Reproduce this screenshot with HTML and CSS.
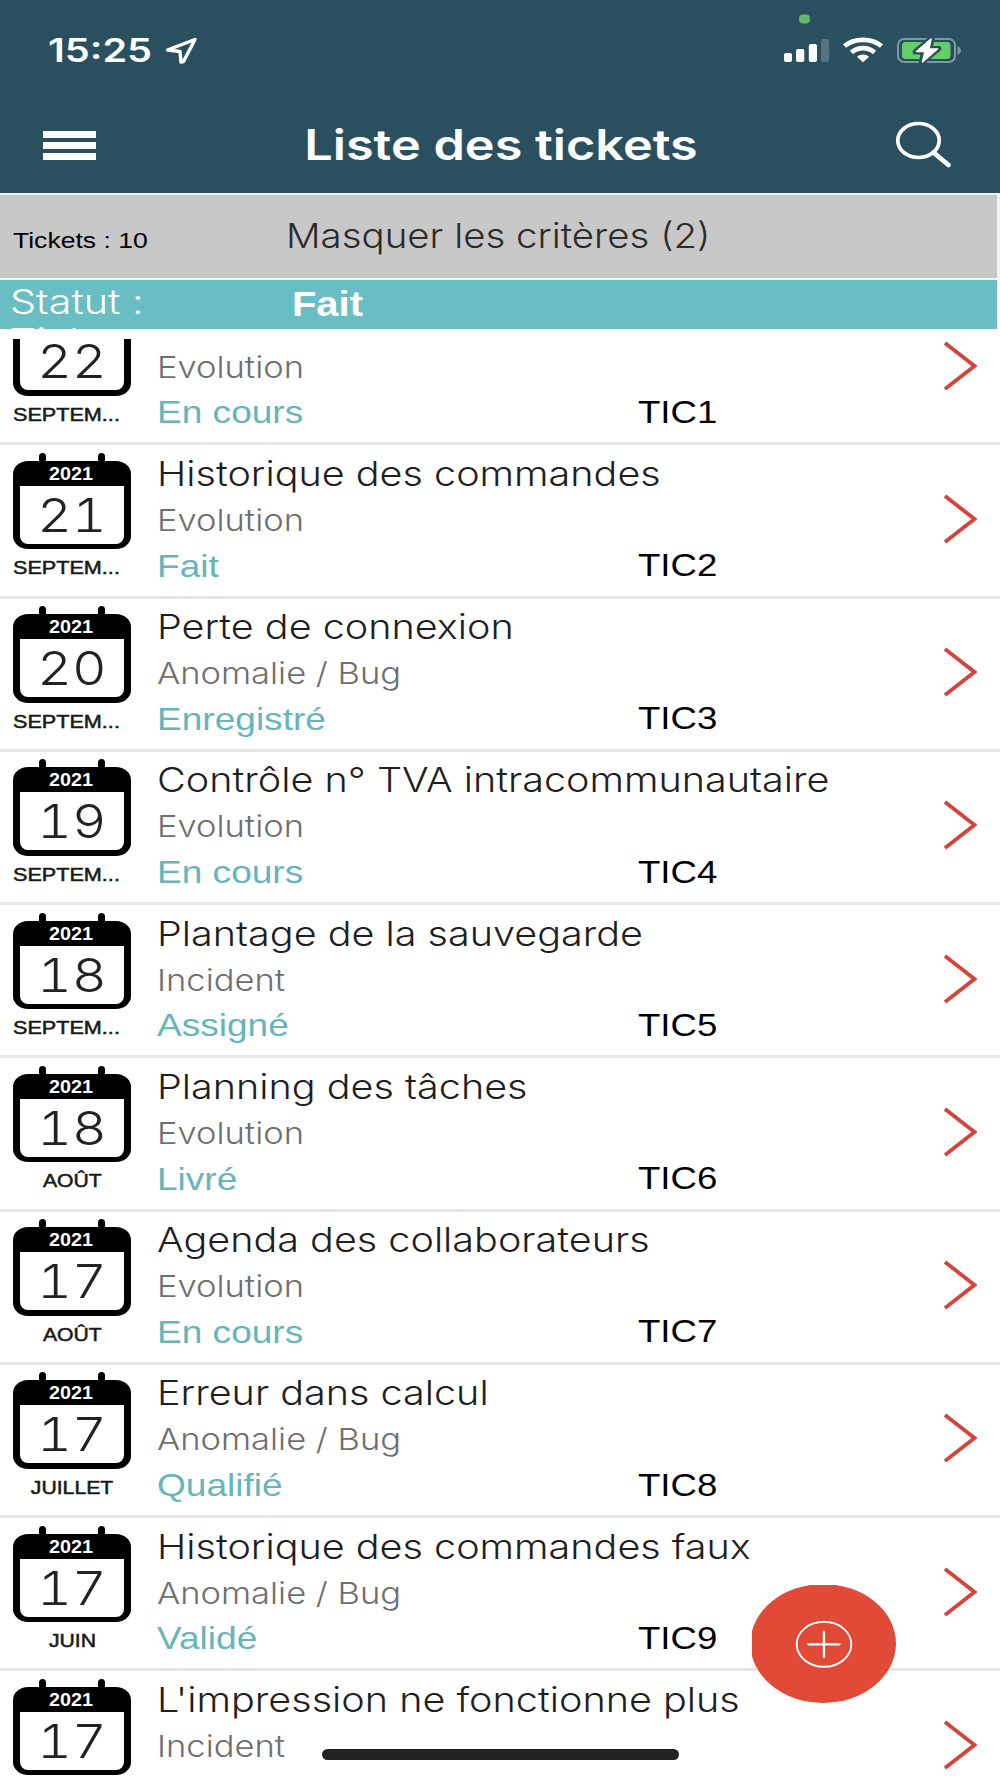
FILE: index.html
```html
<!DOCTYPE html>
<html lang="fr">
<head>
<meta charset="utf-8">
<title>Liste des tickets</title>
<link rel="stylesheet" href="styles.css">
</head>
<body>
<svg class="defs" width="0" height="0" aria-hidden="true">
  <symbol id="chevron" viewBox="0 0 34 50"><path d="M2 2 L31.5 25 L2 48" fill="none" stroke="#d6433b" stroke-width="3.8"/></symbol>
</svg>
<div class="screen">
  <header class="header">
    <div class="status">
      <span class="time">15:25</span>
      <svg class="location" width="34" height="28" viewBox="0 0 34 28"><path d="M30 2.5 L2.500 13 L15 14.500 L16 25 L18.500 24.500 Z" fill="none" stroke="#fff" stroke-width="3.4" stroke-linejoin="round"/></svg>
      <svg class="indicators" width="190" height="56" viewBox="0 0 190 56">
        <rect x="29" y="4.5" width="11" height="9" rx="4" fill="#5fb768"/>
        <g fill="#fff">
          <rect x="14" y="43" width="8" height="9" rx="2"/>
          <rect x="26" y="39" width="8.3" height="13" rx="2"/>
          <rect x="38.8" y="34" width="8.2" height="18" rx="2"/>
          <rect x="51" y="29" width="8.2" height="23" rx="2" fill="#56737f"/>
        </g>
        <g fill="none" stroke="#fff">
          <path d="M74.500 36 C84 27.700 102 27.700 111.500 36" stroke-width="4.8"/>
          <path d="M81.500 42.500 C88 36.700 98 36.700 104.500 42.500" stroke-width="4.800"/>
        </g>
        <path d="M87 47 C90.500 43.800 95.500 43.800 99 47 L93 52.300 Z" fill="#fff"/>
        <rect x="128" y="29" width="57" height="23" rx="6" fill="none" stroke="#8097a5" stroke-width="2"/>
        <path d="M188 36.500 Q193 40.500 188 44.500 Z" fill="#8097a5" stroke="#8097a5"/>
        <rect x="132" y="32" width="48.500" height="17" rx="3.500" fill="#62d067"/>
        <path d="M162.500 27 L145 42 H153.500 L151 53.500 L169 38.500 H160 Z" fill="#fff" stroke="#2a4f5f" stroke-width="5" stroke-linejoin="round"/>
        <path d="M161 29 L146.500 41.500 H155 L152.500 52 L167.500 39 H159 Z" fill="#fff" stroke="#fff" stroke-width="1.500" stroke-linejoin="round"/>
      </svg>
    </div>
    <div class="navbar">
      <div class="menu"><i></i><i></i><i></i></div>
      <h1 class="heading">Liste des tickets</h1>
      <svg class="search" width="60" height="50" viewBox="0 0 60 50"><g fill="none" stroke="#fff" stroke-width="3.700" stroke-linecap="round"><ellipse cx="24.500" cy="20.500" rx="20.700" ry="17"/><path d="M39.500 32.500 L54.500 45" stroke-width="4.800"/></g></svg>
    </div>
  </header>
  <div class="criteria">
    <span class="count">Tickets : 10</span>
    <span class="toggle">Masquer les critères (2)</span>
  </div>
  <div class="filters">
    <span class="filter-name">Statut :</span><span class="filter-value">Fait</span>
    <span class="filter-name">Ticket :</span>
  </div>
  <main class="list">
    <article class="row first">
      <div class="date"><div class="cal"><span class="year"></span><span class="day"><b>22</b></span></div><span class="month long">SEPTEM...</span></div>
      <div class="details"><span class="title"></span><span class="type">Evolution</span><span class="state">En cours</span></div>
      <span class="ref">TIC1</span><svg class="chevron"><use href="#chevron"/></svg>
    </article>
    <article class="row">
      <div class="date"><div class="cal"><span class="year">2021</span><span class="day"><b>21</b></span></div><span class="month long">SEPTEM...</span></div>
      <div class="details"><span class="title">Historique des commandes</span><span class="type">Evolution</span><span class="state">Fait</span></div>
      <span class="ref">TIC2</span><svg class="chevron"><use href="#chevron"/></svg>
    </article>
    <article class="row">
      <div class="date"><div class="cal"><span class="year">2021</span><span class="day"><b>20</b></span></div><span class="month long">SEPTEM...</span></div>
      <div class="details"><span class="title">Perte de connexion</span><span class="type">Anomalie / Bug</span><span class="state">Enregistré</span></div>
      <span class="ref">TIC3</span><svg class="chevron"><use href="#chevron"/></svg>
    </article>
    <article class="row">
      <div class="date"><div class="cal"><span class="year">2021</span><span class="day"><b>19</b></span></div><span class="month long">SEPTEM...</span></div>
      <div class="details"><span class="title">Contrôle n° TVA intracommunautaire</span><span class="type">Evolution</span><span class="state">En cours</span></div>
      <span class="ref">TIC4</span><svg class="chevron"><use href="#chevron"/></svg>
    </article>
    <article class="row">
      <div class="date"><div class="cal"><span class="year">2021</span><span class="day"><b>18</b></span></div><span class="month long">SEPTEM...</span></div>
      <div class="details"><span class="title">Plantage de la sauvegarde</span><span class="type">Incident</span><span class="state">Assigné</span></div>
      <span class="ref">TIC5</span><svg class="chevron"><use href="#chevron"/></svg>
    </article>
    <article class="row">
      <div class="date"><div class="cal"><span class="year">2021</span><span class="day"><b>18</b></span></div><span class="month">AOÛT</span></div>
      <div class="details"><span class="title">Planning des tâches</span><span class="type">Evolution</span><span class="state">Livré</span></div>
      <span class="ref">TIC6</span><svg class="chevron"><use href="#chevron"/></svg>
    </article>
    <article class="row">
      <div class="date"><div class="cal"><span class="year">2021</span><span class="day"><b>17</b></span></div><span class="month">AOÛT</span></div>
      <div class="details"><span class="title">Agenda des collaborateurs</span><span class="type">Evolution</span><span class="state">En cours</span></div>
      <span class="ref">TIC7</span><svg class="chevron"><use href="#chevron"/></svg>
    </article>
    <article class="row">
      <div class="date"><div class="cal"><span class="year">2021</span><span class="day"><b>17</b></span></div><span class="month">JUILLET</span></div>
      <div class="details"><span class="title">Erreur dans calcul</span><span class="type">Anomalie / Bug</span><span class="state">Qualifié</span></div>
      <span class="ref">TIC8</span><svg class="chevron"><use href="#chevron"/></svg>
    </article>
    <article class="row">
      <div class="date"><div class="cal"><span class="year">2021</span><span class="day"><b>17</b></span></div><span class="month">JUIN</span></div>
      <div class="details"><span class="title">Historique des commandes faux</span><span class="type">Anomalie / Bug</span><span class="state">Validé</span></div>
      <span class="ref">TIC9</span><svg class="chevron"><use href="#chevron"/></svg>
    </article>
    <article class="row">
      <div class="date"><div class="cal"><span class="year">2021</span><span class="day"><b>17</b></span></div></div>
      <div class="details"><span class="title">L'impression ne fonctionne plus</span><span class="type">Incident</span></div>
      <span class="ref"></span><svg class="chevron"><use href="#chevron"/></svg>
    </article>
  </main>
  <svg class="add" width="144" height="118" viewBox="0 0 144 118">
    <ellipse cx="71.200" cy="58.500" rx="72.800" ry="59.500" fill="#e04a36"/>
    <ellipse cx="72" cy="59.300" rx="27.300" ry="22.500" fill="none" stroke="#fff" stroke-width="1.900"/>
    <path d="M56.500 59.300 H87.500 M72 47 V72" stroke="#fff" stroke-width="2.300" stroke-linecap="round"/>
  </svg>
  <div class="home-indicator"></div>
</div>
</body>
</html>
```
FILE: styles.css
```css
* { box-sizing: border-box; }
body {
  margin: 0;
  background: #fff;
  font-family: "Liberation Sans", Arial, sans-serif;
  color: #000;
}
.defs { position: absolute; }
.screen {
  position: relative;
  display: flex;
  flex-direction: column;
  width: 1000px;
  height: 1778px;
  overflow: hidden;
}
span, h1 { white-space: nowrap; }

/* Header */
.header {
  flex: none;
  height: 193px;
  background: #2a4f5f;
  color: #fff;
}
.status {
  display: flex;
  align-items: flex-start;
  height: 98px;
  padding: 10px 40px 0 48px;
}
.time {
  width: 117px;
  padding-top: 21px;
  font: 600 32px/40px Inter, sans-serif;
  transform: scaleX(1.24);
  transform-origin: left;
}
.location { margin-top: 27px; }
.indicators { margin-left: auto; overflow: visible; }
.navbar {
  display: flex;
  justify-content: space-between;
  padding: 21px 46px 0 43px;
}
.menu {
  display: flex;
  flex-direction: column;
  gap: 4px;
  width: 53px;
  padding-top: 12px;
}
.menu i { height: 7px; background: #fff; }
.heading {
  margin: 0 0 0 12px;
  font: 600 42px/52px Inter, sans-serif;
  transform: scaleX(1.2);
}
.search { margin-top: 1px; }

/* Criteria bar and active filters */
.criteria {
  flex: none;
  display: flex;
  height: 87px;
  border: solid #f3f3f3;
  border-width: 2px 3px 2px 0;
  background: #c8c8c8;
}
.count {
  width: 286px;
  padding: 33px 0 0 11px;
  font-size: 22.5px;
  line-height: 26px;
  transform: scaleX(1.18);
  transform-origin: left;
}
.toggle {
  padding-top: 21px;
  font: 300 34px/40px Inter, sans-serif;
  color: #2b2b2b;
  transform: scaleX(1.13);
  transform-origin: left;
}
.filters {
  flex: none;
  display: grid;
  grid-template-columns: 282px 1fr;
  grid-auto-rows: 38.5px;
  width: 997px;
  height: 48.5px;
  padding-left: 10px;
  overflow: hidden;
  background: #68bec3;
  color: #fff;
}
.filter-name {
  font: 300 34px/42px Inter, sans-serif;
  transform: translateY(0.5px) scaleX(1.215);
  transform-origin: left;
}
.filter-value {
  font-size: 35px;
  font-weight: 700;
  line-height: 47px;
  transform: scaleX(1.14);
  transform-origin: left;
}

/* Ticket list */
.list {
  flex: 1;
  min-height: 0;
  margin-top: 10.5px;
  overflow: hidden;
}
.row {
  display: grid;
  grid-template-columns: 118px 480px 332px 34px;
  height: 153.25px;
  padding-left: 13px;
  border-bottom: 3px solid #e6e6e6;
}
.row.first { margin-top: -46.8px; }
.date {
  display: flex;
  flex-direction: column;
  padding-top: 15.5px;
}
.cal {
  position: relative;
  display: flex;
  flex-direction: column;
  height: 88.5px;
  padding: 0 7px 6px;
  border-radius: 15px / 13px;
  background: #000;
  text-align: center;
}
.cal::before, .cal::after {
  content: "";
  position: absolute;
  top: -8px;
  width: 7px;
  height: 14px;
  border-radius: 3.5px;
  background: #000;
}
.cal::before { left: 26px; }
.cal::after { right: 26px; }
.year {
  height: 25px;
  color: #fff;
  font-size: 17.5px;
  font-weight: 700;
  line-height: 27px;
  transform: translateX(-1px) scaleX(1.13);
}
.day {
  flex: 1;
  border-radius: 0 0 8px 8px;
  background: #fff;
  color: #222;
  font: 300 47px/58px Inter, sans-serif;
  font-variant-numeric: tabular-nums;
}
.day b {
  display: block;
  font-weight: 300;
  transform: scaleX(1.14);
}
.month {
  align-self: center;
  font-size: 17.5px;
  line-height: 38px;
  color: #1a1a1a;
  -webkit-text-stroke: 0.5px #1a1a1a;
  transform: scaleX(1.21);
}
.month.long {
  align-self: flex-start;
  transform: scaleX(1.235);
  transform-origin: left;
}
.details {
  display: flex;
  flex-direction: column;
  gap: 5.8px;
  padding: 8.5px 0 0 26px;
}
.details span {
  min-height: 40px;
  line-height: 40px;
  transform-origin: left;
}
.title {
  font: 300 34px Inter, sans-serif;
  color: #1f1f1f;
  transform: scaleX(1.163);
}
.type {
  font: 300 30px Inter, sans-serif;
  color: #6f6f6f;
  transform: scaleX(1.15);
}
.state {
  font-size: 30.5px;
  color: #66b5ba;
  transform: scaleX(1.215);
}
.ref {
  padding: 99.6px 0 0 27px;
  font-size: 30.5px;
  line-height: 40px;
  transform: scaleX(1.2);
  transform-origin: 27px 0;
}
.chevron {
  width: 34px;
  height: 50px;
  margin-top: 48.5px;
}

/* Overlays */
.add {
  position: absolute;
  left: 752px;
  top: 1585px;
}
.home-indicator {
  position: absolute;
  left: 322px;
  top: 1749px;
  width: 357px;
  height: 11px;
  border-radius: 6px;
  background: #222;
}
```
